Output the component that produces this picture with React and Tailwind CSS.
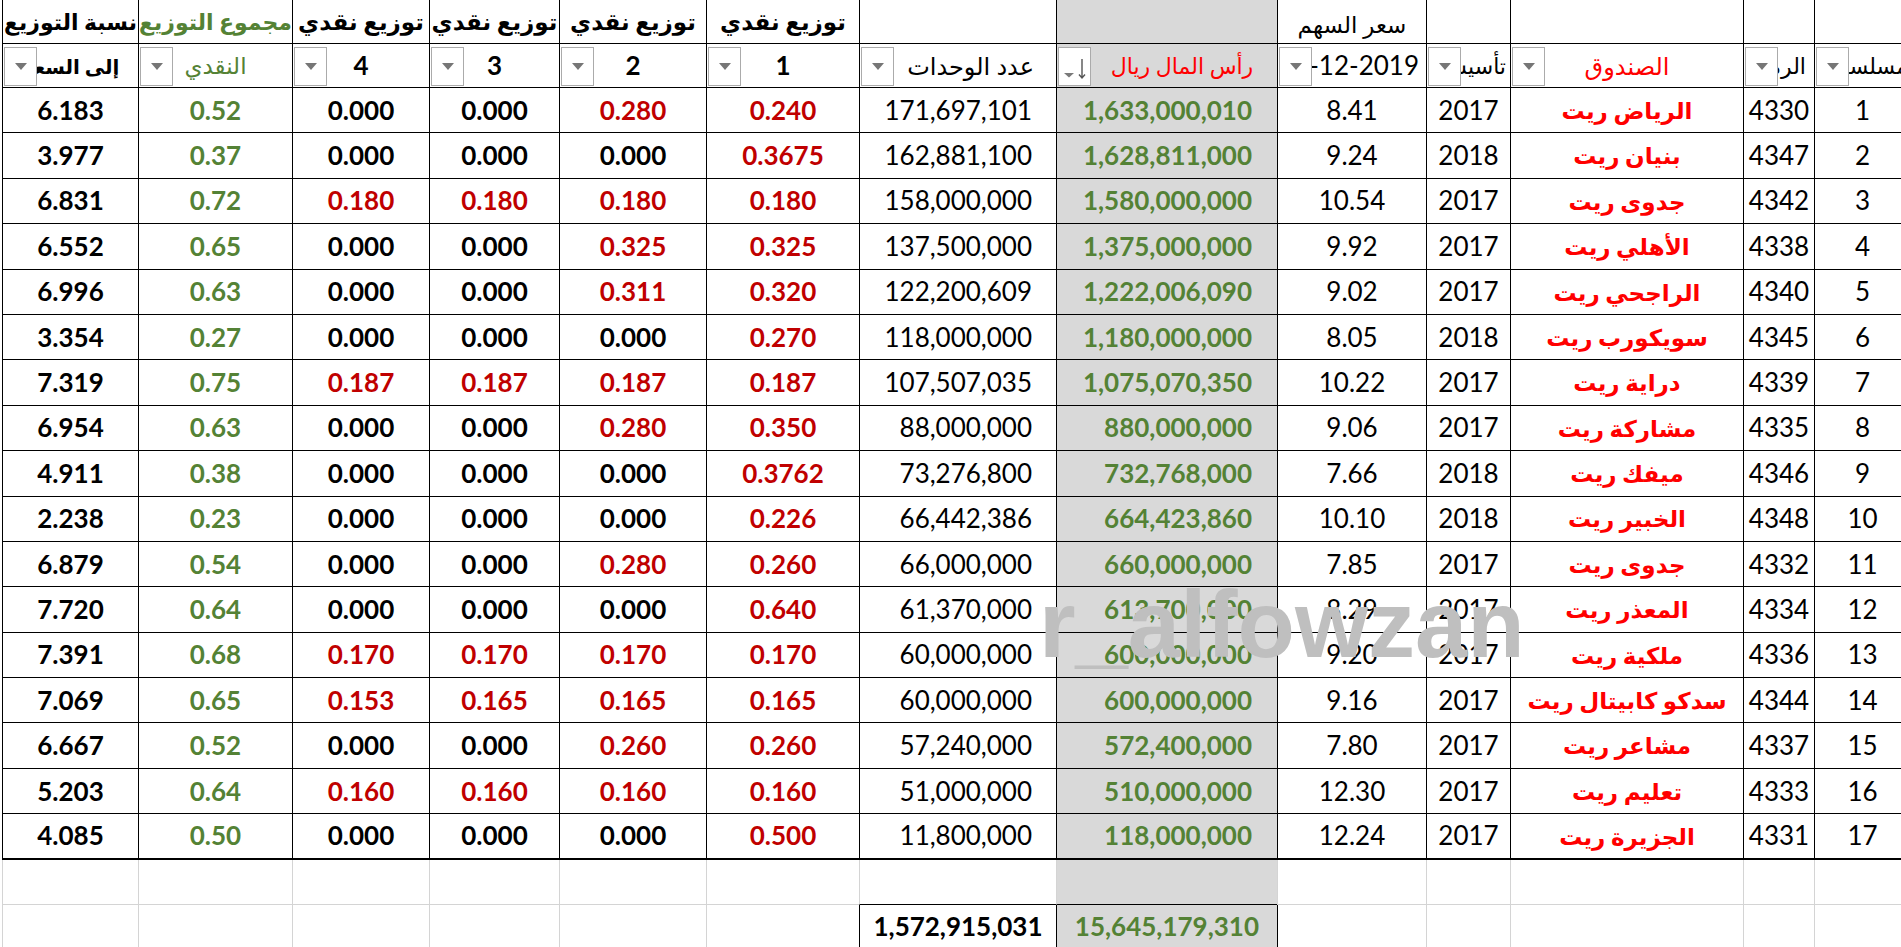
import React from "react";
import clsx from "clsx";

// column widths, left to right as the sheet shows them (the sheet is right-to-left)
const W = [
  "w-[136px]",
  "w-[154px]",
  "w-[137px]",
  "w-[130px]",
  "w-[147px]",
  "w-[153px]",
  "w-[197px]",
  "w-[221px]",
  "w-[149px]",
  "w-[84px]",
  "w-[233px]",
  "w-[71px]",
  "w-[96px]",
];

// serial, symbol, fund, year, price, capital, units, [d1..d4], total, yield
const rows = [
  [1, 4330, "الرياض ريت", 2017, "8.41", "1,633,000,010", "171,697,101", ["0.240", "0.280", "0.000", "0.000"], "0.52", "6.183"],
  [2, 4347, "بنيان ريت", 2018, "9.24", "1,628,811,000", "162,881,100", ["0.3675", "0.000", "0.000", "0.000"], "0.37", "3.977"],
  [3, 4342, "جدوى ريت", 2017, "10.54", "1,580,000,000", "158,000,000", ["0.180", "0.180", "0.180", "0.180"], "0.72", "6.831"],
  [4, 4338, "الأهلي ريت", 2017, "9.92", "1,375,000,000", "137,500,000", ["0.325", "0.325", "0.000", "0.000"], "0.65", "6.552"],
  [5, 4340, "الراجحي ريت", 2017, "9.02", "1,222,006,090", "122,200,609", ["0.320", "0.311", "0.000", "0.000"], "0.63", "6.996"],
  [6, 4345, "سويكورب ريت", 2018, "8.05", "1,180,000,000", "118,000,000", ["0.270", "0.000", "0.000", "0.000"], "0.27", "3.354"],
  [7, 4339, "دراية ريت", 2017, "10.22", "1,075,070,350", "107,507,035", ["0.187", "0.187", "0.187", "0.187"], "0.75", "7.319"],
  [8, 4335, "مشاركة ريت", 2017, "9.06", "880,000,000", "88,000,000", ["0.350", "0.280", "0.000", "0.000"], "0.63", "6.954"],
  [9, 4346, "ميفك ريت", 2018, "7.66", "732,768,000", "73,276,800", ["0.3762", "0.000", "0.000", "0.000"], "0.38", "4.911"],
  [10, 4348, "الخبير ريت", 2018, "10.10", "664,423,860", "66,442,386", ["0.226", "0.000", "0.000", "0.000"], "0.23", "2.238"],
  [11, 4332, "جدوى ريت", 2017, "7.85", "660,000,000", "66,000,000", ["0.260", "0.280", "0.000", "0.000"], "0.54", "6.879"],
  [12, 4334, "المعذر ريت", 2017, "8.29", "613,700,000", "61,370,000", ["0.640", "0.000", "0.000", "0.000"], "0.64", "7.720"],
  [13, 4336, "ملكية ريت", 2017, "9.20", "600,000,000", "60,000,000", ["0.170", "0.170", "0.170", "0.170"], "0.68", "7.391"],
  [14, 4344, "سدكو كابيتال ريت", 2017, "9.16", "600,000,000", "60,000,000", ["0.165", "0.165", "0.165", "0.153"], "0.65", "7.069"],
  [15, 4337, "مشاعر ريت", 2017, "7.80", "572,400,000", "57,240,000", ["0.260", "0.260", "0.000", "0.000"], "0.52", "6.667"],
  [16, 4333, "تعليم ريت", 2017, "12.30", "510,000,000", "51,000,000", ["0.160", "0.160", "0.160", "0.160"], "0.64", "5.203"],
  [17, 4331, "الجزيرة ريت", 2017, "12.24", "118,000,000", "11,800,000", ["0.500", "0.000", "0.000", "0.000"], "0.50", "4.085"],
];

const Cell = ({ i, className, children }) => (
  <div
    className={clsx(
      "relative flex shrink-0 items-center justify-center overflow-hidden whitespace-nowrap border-l border-b",
      W[i],
      i === 7 && "bg-[#d9d9d9]",
      className
    )}
  >
    {children}
  </div>
);

const Drop = ({ sort }) => (
  <span className="absolute left-[1px] top-[3px] z-10 flex h-[39px] w-[33px] items-center justify-center border border-[#ababab] bg-white">
    {sort ? (
      <svg width="31" height="37" viewBox="0 0 31 37">
        <path d="M5 25h10l-5 4.5z" fill="#7a7a7a" />
        <path d="M23 11v19M20 26.5l3 3.5 3-3.5" stroke="#555" strokeWidth="1.4" fill="none" />
      </svg>
    ) : (
      <svg width="12" height="8" viewBox="0 0 12 8">
        <path d="M0 0h12L6 7z" fill="#767676" />
      </svg>
    )}
  </span>
);

const dist = (v) => (v === "0.000" ? "text-black" : "text-[#c00000]");

export default function App() {
  return (
    <div className="relative h-[947px] w-[1901px] overflow-hidden bg-white font-[Lato,'DejaVu_Sans',sans-serif] text-black">
      <div className="ml-[2px] flex w-max flex-col">
        {/* header line 1 */}
        <div className="flex h-[44px]">
          <Cell i={0} className="border-black text-[22px] font-bold">نسبة التوزيع</Cell>
          <Cell i={1} className="border-black text-[22px] font-bold text-[#548235]">مجموع التوزيع</Cell>
          <Cell i={2} className="border-black text-[23px] font-bold">توزيع نقدي</Cell>
          <Cell i={3} className="border-black text-[23px] font-bold">توزيع نقدي</Cell>
          <Cell i={4} className="border-black text-[23px] font-bold">توزيع نقدي</Cell>
          <Cell i={5} className="border-black text-[23px] font-bold">توزيع نقدي</Cell>
          <Cell i={6} className="border-black" />
          <Cell i={7} className="border-black" />
          <Cell i={8} className="border-black pt-[6px] text-[23px]">سعر السهم</Cell>
          <Cell i={9} className="border-black" />
          <Cell i={10} className="border-black" />
          <Cell i={11} className="border-black" />
          <Cell i={12} className="border-black" />
        </div>

        {/* header line 2 with filter buttons */}
        <div className="flex h-[44px]">
          <Cell i={0} className="border-black text-[20px] font-bold"><Drop />إلى السعر</Cell>
          <Cell i={1} className="border-black text-[23px] text-[#548235]"><Drop />النقدي</Cell>
          <Cell i={2} className="border-black text-[26px] font-bold"><Drop />4</Cell>
          <Cell i={3} className="border-black text-[26px] font-bold"><Drop />3</Cell>
          <Cell i={4} className="border-black text-[26px] font-bold"><Drop />2</Cell>
          <Cell i={5} className="border-black text-[26px] font-bold"><Drop />1</Cell>
          <Cell i={6} className="justify-end border-black pr-[22px] text-[24px]"><Drop />عدد الوحدات</Cell>
          <Cell i={7} className="border-black pl-[30px] text-[22px] text-[#ff0000]"><Drop sort />رأس المال ريال</Cell>
          <Cell i={8} className="justify-end border-black pr-[7px] text-[26px]"><Drop /><span dir="ltr">31-12-2019</span></Cell>
          <Cell i={9} className="justify-end border-black pr-[4px] text-[22px]"><Drop />تأسيس</Cell>
          <Cell i={10} className="border-black text-[24px] text-[#ff0000]"><Drop />الصندوق</Cell>
          <Cell i={11} className="justify-end border-black pr-[8px] text-[22px]"><Drop />الرمز</Cell>
          <Cell i={12} className="justify-end border-black pr-[2px] text-[22px]"><Drop />مسلسل</Cell>
        </div>

        {rows.map(([n, sym, name, year, price, cap, units, d, sum, pct], k) => {
          const b = k === rows.length - 1 ? "border-b-2 border-black" : "border-black";
          return (
            <div key={n} className="flex h-[45.4px] text-[26px]">
              <Cell i={0} className={clsx(b, "font-bold")}>{pct}</Cell>
              <Cell i={1} className={clsx(b, "font-bold text-[#548235]")}>{sum}</Cell>
              <Cell i={2} className={clsx(b, "font-bold", dist(d[3]))}>{d[3]}</Cell>
              <Cell i={3} className={clsx(b, "font-bold", dist(d[2]))}>{d[2]}</Cell>
              <Cell i={4} className={clsx(b, "font-bold", dist(d[1]))}>{d[1]}</Cell>
              <Cell i={5} className={clsx(b, "font-bold", dist(d[0]))}>{d[0]}</Cell>
              <Cell i={6} className={clsx(b, "justify-end pr-[24px]")}>{units}</Cell>
              <Cell i={7} className={clsx(b, "justify-end pr-[25px] font-bold text-[#548235]")}>{cap}</Cell>
              <Cell i={8} className={b}>{price}</Cell>
              <Cell i={9} className={b}>{year}</Cell>
              <Cell i={10} className={clsx(b, "text-[23px] font-bold text-[#ff0000]")}>{name}</Cell>
              <Cell i={11} className={b}>{sym}</Cell>
              <Cell i={12} className={b}>{n}</Cell>
            </div>
          );
        })}

        {/* blank line */}
        <div className="flex h-[45px]">
          {W.map((_, i) => (
            <Cell
              key={i}
              i={i}
              className={clsx(
                i === 6 || i === 7 ? "border-b-black" : "border-b-[#d4d4d4]",
                "border-l-[#d4d4d4]"
              )}
            />
          ))}
        </div>

        {/* totals */}
        <div className="flex h-[45px] text-[26px] font-bold">
          {W.map((_, i) => (
            <Cell
              key={i}
              i={i}
              className={clsx(
                "border-b-[#d4d4d4]",
                i >= 6 && i <= 8 ? "border-l-black" : "border-l-[#d4d4d4]",
                i === 7 && "justify-end pr-[18px] text-[#548235]"
              )}
            >
              {i === 6 ? "1,572,915,031" : i === 7 ? "15,645,179,310" : null}
            </Cell>
          ))}
        </div>
      </div>

      <div className="pointer-events-none absolute left-[1039px] top-[578px] z-20 font-['Liberation_Sans',sans-serif] text-[94px] font-bold leading-none text-[#bfbfbf]">
        r_alfowzan
      </div>
    </div>
  );
}
